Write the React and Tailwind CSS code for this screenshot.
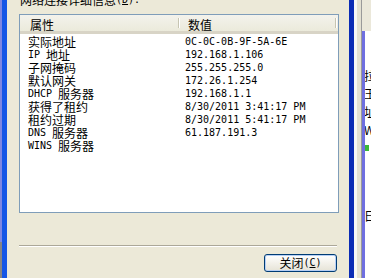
import React from 'react';

// SimSun-like mix: Chinese at 12px, latin half-width at 6px per char
function Txt({ s }) {
  const parts = s.split(/([\u4e00-\u9fff]+)/).filter(Boolean);
  return (
    <>
      {parts.map((p, i) =>
        /[\u4e00-\u9fff]/.test(p) ? (
          <span key={i} className="text-[12px] font-['Noto_Sans_CJK_SC',sans-serif]">{p}</span>
        ) : (
          <span key={i} className="text-[10px] font-['DejaVu_Sans_Mono',monospace] whitespace-pre">{p}</span>
        )
      )}
    </>
  );
}

const rows = [
  ['实际地址', '0C-0C-0B-9F-5A-6E'],
  ['IP 地址', '192.168.1.106'],
  ['子网掩码', '255.255.255.0'],
  ['默认网关', '172.26.1.254'],
  ['DHCP 服务器', '192.168.1.1'],
  ['获得了租约', '8/30/2011 3:41:17 PM'],
  ['租约过期', '8/30/2011 5:41:17 PM'],
  ['DNS 服务器', '61.187.191.3'],
  ['WINS 服务器', ''],
];

export default function App() {
  return (
    <div className="w-[371px] h-[278px] overflow-hidden flex bg-[#ece9d8] text-black">
      {/* left window frame */}
      <div className="w-[2px] flex flex-col">
        <div className="flex-1 bg-[#7d87e2]" />
        <div className="h-[36px] bg-[#858585]" />
      </div>
      <div className="w-[5px] bg-[#1456e6]" />

      {/* dialog body */}
      <div className="w-[342px] flex flex-col pl-[12px]">
        <div className="h-[14px] flex items-start">
          <div className="-mt-[6px] ml-[1px] leading-[12px] flex items-center">
            <Txt s="网络连接详细信息" />
            <span className="text-[10px] font-['DejaVu_Sans_Mono',monospace]">(<u>D</u>):</span>
          </div>
        </div>

        <div className="w-[320px] h-[199px] border border-[#7f9db9] bg-white flex flex-col">
          <div className="h-[19px] flex bg-gradient-to-b from-[#f3f2ec] to-[#ebeadb] border-b-[3px] border-[#d8d4c6]">
            <div className="w-[158px] pl-[10px] pt-[3px] leading-[12px]">
              <Txt s="属性" />
            </div>
            <div className="w-[2px] flex flex-col py-[3px]">
              <div className="flex-1 flex">
                <div className="w-[1px] bg-[#c7c5b2]" />
                <div className="w-[1px] bg-white" />
              </div>
            </div>
            <div className="w-[155px] pl-[8px] pt-[3px] leading-[12px]">
              <Txt s="数值" />
            </div>
            <div className="w-[2px] flex flex-col py-[3px]">
              <div className="flex-1 flex">
                <div className="w-[1px] bg-[#c7c5b2]" />
                <div className="w-[1px] bg-white" />
              </div>
            </div>
          </div>
          <div className="flex flex-col pt-[1px]">
            {rows.map(([k, v]) => (
              <div key={k} className="h-[13px] flex items-center leading-[13px]">
                <div className="w-[159px] pl-[8px] flex items-center">
                  <Txt s={k} />
                </div>
                <div className="pl-[6px] flex items-center">
                  <Txt s={v} />
                </div>
              </div>
            ))}
          </div>
        </div>

        <div className="mt-[32px] w-[318px] h-[2px] border-t border-[#aca899] border-b border-b-white" />

        <div className="w-[318px] flex justify-end mt-[7px]">
          <button className="w-[73px] h-[18px] rounded-[3px] border border-[#003c74] bg-gradient-to-b from-white to-[#e6e3d6] shadow-[inset_0_0_0_1px_#b6cff5] flex items-center justify-center leading-[14px]">
            <Txt s="关闭" />
            <span className="text-[10px] font-['DejaVu_Sans_Mono',monospace]">(<u>C</u>)</span>
          </button>
        </div>
      </div>

      {/* right frame and window behind */}
      <div className="w-[5px] bg-[#0a2bb5]" />
      <div className="w-[3px] bg-[#f6f6f6]" />
      <div className="w-[4px] bg-[#e3e0d2]" />
      <div className="w-[1px] bg-[#9a9a9a]" />
      <div className="w-[9px] flex flex-col">
        <div className="h-[31px] bg-[#ebe8da]" />
        <div className="flex-1 flex">
          <div className="w-[3px] bg-[#6f6fe0]" />
          <div className="flex-1 bg-white overflow-hidden flex flex-col pt-[36px] leading-[18px] text-[12px] font-['Noto_Sans_CJK_SC',sans-serif]">
            <span className="-ml-[1px]">拉</span>
            <span className="-ml-[1px]">王</span>
            <span className="-ml-[1px]">址</span>
            <span className="-ml-[1px]">W</span>
            <div className="mt-[6px] h-[6px] w-[4px] bg-[#3ab83a]" />
            <span className="mt-[56px] -ml-[1px]">日</span>
          </div>
        </div>
      </div>
    </div>
  );
}
